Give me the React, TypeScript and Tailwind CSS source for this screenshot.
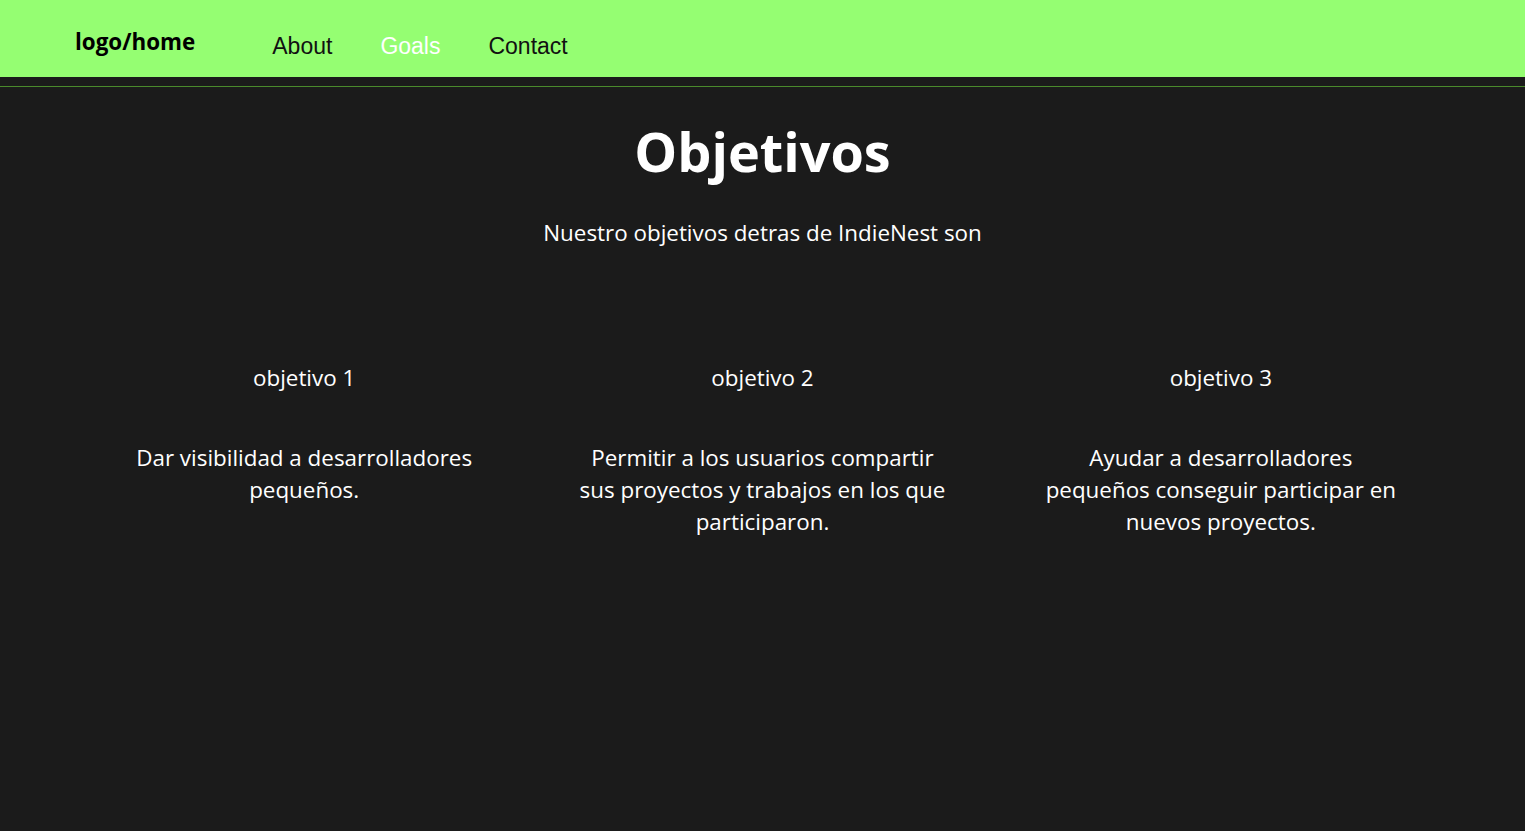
import React from "react";

const goals = [
  { t: "objetivo 1", d: "Dar visibilidad a desarrolladores pequeños." },
  { t: "objetivo 2", d: "Permitir a los usuarios compartir sus proyectos y trabajos en los que participaron." },
  { t: "objetivo 3", d: "Ayudar a desarrolladores pequeños conseguir participar en nuevos proyectos." },
];

export default function App() {
  return (
    <div className="min-h-[831px] bg-[#1b1b1b] font-['Open_Sans',sans-serif] text-white">
      <header className="h-[77px] bg-[#95fe72] flex items-center pl-[75px] pt-[16px]">
        <a className="font-bold text-[22.4px] text-black mb-[10px]">logo/home</a>
        <nav className="flex items-center gap-[48px] ml-[77px] font-['Liberation_Sans',Arial,sans-serif] text-[23px]">
          <a className="text-[#111]">About</a>
          <a className="text-white">Goals</a>
          <a className="text-[#111]">Contact</a>
        </nav>
      </header>
      <div className="h-[10px] border-b border-[#4a8a2c]" />
      <main className="flex flex-col items-center">
        <h1 className="mt-[28px] text-[54px] font-bold leading-[72px]">Objetivos</h1>
        <p className="mt-[30px] text-[22.4px] leading-[32px]">Nuestro objetivos detras de IndieNest son</p>
        <div className="mt-[113px] w-full px-[75px] grid grid-cols-3">
          {goals.map((g) => (
            <div key={g.t} className="flex flex-col items-center text-center">
              <h3 className="text-[22.4px] leading-[32px]">{g.t}</h3>
              <p className="mt-[48px] max-w-[369px] text-[22.4px] leading-[32px]">{g.d}</p>
            </div>
          ))}
        </div>
      </main>
    </div>
  );
}
